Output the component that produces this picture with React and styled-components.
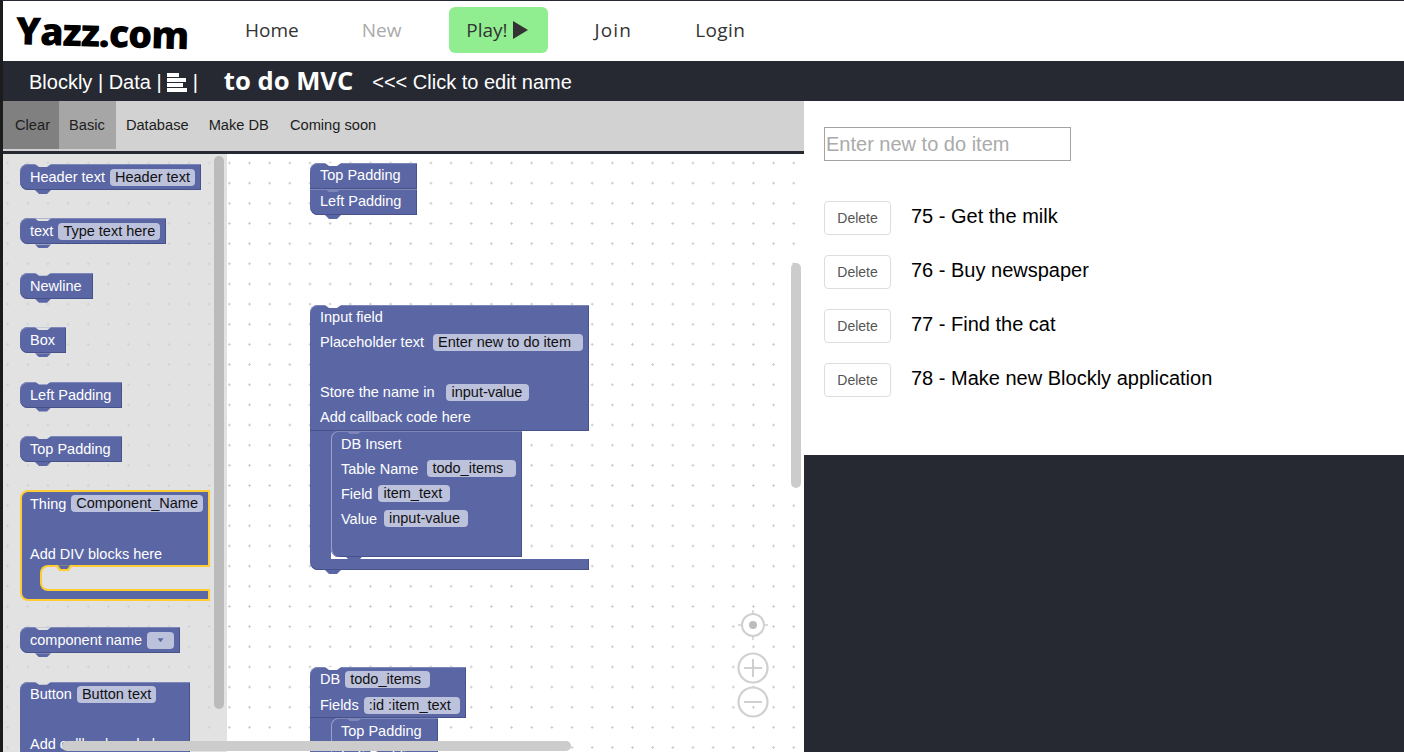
import React from 'react';
import styled, { createGlobalStyle } from 'styled-components';

const GlobalStyle = createGlobalStyle`
  html, body {
    margin: 0;
    padding: 0;
    background: #262932;
    overflow: hidden;
  }
  * {
    box-sizing: border-box;
  }
`;

const BLOCK = '#5b67a5';
const BLOCK_LIGHT = '#7e87b9';
const SANS = '"Liberation Sans", Arial, sans-serif';
const NAV = '"Open Sans", "Noto Sans", sans-serif';
const NOTCH = 'polygon(0 0, 100% 0, 75% 100%, 25% 100%)';

const Page = styled.div`
  width: 1404px;
  height: 752px;
  border-top: 1px solid #262932;
  border-left: 3px solid #1c1c1c;
  display: flex;
  flex-direction: column;
  overflow: hidden;
  font-family: ${SANS};
`;

const Header = styled.header`
  height: 60px;
  flex: none;
  background: #fff;
  padding-bottom: 2px;
  display: flex;
  align-items: center;
`;

const Logo = styled.div`
  width: 242px;
  padding-left: 13px;
  font-family: "Open Sans", sans-serif;
  font-weight: 800;
  font-size: 38px;
  letter-spacing: -1.1px;
  color: #000;
  white-space: nowrap;
  transform: translateY(-1px) rotate(1.6deg);
  transform-origin: left center;
`;

const NavLink = styled.a`
  margin-left: ${p => p.$ml || 0}px;
  font-family: ${NAV};
  font-size: 19px;
  letter-spacing: ${p => p.$spacing || 0}px;
  color: ${p => (p.$muted ? '#aaa' : '#333')};
`;

const PlayButton = styled.a`
  margin-left: 48px;
  width: 99px;
  height: 46px;
  background: #90ee90;
  border-radius: 6px;
  display: flex;
  align-items: center;
  justify-content: center;
  gap: 5px;
  padding-right: 4px;
  font-family: ${NAV};
  font-size: 19px;
  color: #333;
`;

const TitleBar = styled.div`
  height: 40px;
  flex: none;
  background: #262932;
  color: #fff;
  display: flex;
  align-items: center;
  padding: 2px 0 0 26px;
  font-size: 20px;
  white-space: nowrap;
`;

const Crumbs = styled.span`
  display: flex;
  align-items: center;
  gap: 5px;
`;

const AppName = styled.span`
  margin-left: 26px;
  margin-top: -3px;
  font-family: "Open Sans", sans-serif;
  font-weight: 700;
  font-size: 25.6px;
`;

const EditHint = styled.span`
  margin-left: 19px;
`;

const Main = styled.div`
  flex: 1;
  min-height: 0;
  display: flex;
`;

const LeftColumn = styled.div`
  width: 801px;
  flex: none;
  display: flex;
  flex-direction: column;
`;

const Toolbar = styled.div`
  height: 53px;
  flex: none;
  background: #d2d2d2;
  border-bottom: 3px solid #262932;
  display: flex;
  align-items: flex-start;
`;

const Tool = styled.a`
  height: 48px;
  display: flex;
  align-items: center;
  padding: 0 ${p => p.$pad || 10}px 0 ${p => p.$padLeft || 10}px;
  background: ${p => p.$bg || 'transparent'};
  font-size: 14.67px;
  color: #1c1c1c;
`;

const Workspace = styled.div`
  flex: 1;
  min-height: 0;
  position: relative;
  overflow: hidden;
  display: flex;
  background: #fff;
`;

const Flyout = styled.div`
  width: 224px;
  flex: none;
  background-color: #e2e2e2;
  background-image: radial-gradient(circle at center, #d2d2d2 1px, transparent 1.3px);
  background-size: 20.16px 20.16px;
  background-position: -5.48px -1.08px;
  padding: 10px 0 0 17px;
  display: flex;
  flex-direction: column;
  align-items: flex-start;
  gap: 28.4px;
`;

const Canvas = styled.div`
  flex: 1;
  position: relative;
  background-image: radial-gradient(circle at center, #ccc 1px, transparent 1.3px);
  background-size: 20.16px 20.16px;
  background-position: 12.44px -1.08px;
`;

const Placed = styled.div`
  position: absolute;
  left: ${p => p.$x}px;
  top: ${p => p.$y}px;
`;

const Block = styled.div`
  position: relative;
  width: ${p => (p.$w ? `${p.$w}px` : 'fit-content')};
  flex: none;
  background: ${BLOCK};
  color: #fff;
  font-family: ${SANS};
  font-size: 14.5px;
  white-space: nowrap;
  border-radius: ${p => (p.$stacked ? '8px 0 0 0' : p.$joined ? '0 0 0 8px' : '8px 0 0 8px')};
  box-shadow: inset 0 1px 0 ${BLOCK_LIGHT}, inset -1px 0 0 #47518a, inset 0 -1px 0 #47518a;

  &::before {
    content: '';
    position: absolute;
    left: 15px;
    top: 0;
    width: 16px;
    height: 3px;
    background: ${p => p.$under || '#fff'};
    clip-path: ${NOTCH};
  }

  &::after {
    content: '';
    position: absolute;
    z-index: 1;
    left: 15px;
    top: 100%;
    width: 16px;
    height: 4px;
    background: ${BLOCK};
    clip-path: ${NOTCH};
    display: ${p => (p.$noTab ? 'none' : 'block')};
  }
`;

const Row = styled.div`
  height: ${p => p.$h || 25}px;
  display: flex;
  align-items: center;
  padding: 0 ${p => p.$end || 6}px ${p => p.$lift || 0}px 10px;
`;

const Chip = styled.span`
  margin-left: ${p => p.$gap || 5}px;
  height: 17px;
  line-height: 16px;
  padding: 0 ${p => p.$right || 5}px 0 5px;
  background: #bcc1dc;
  border-radius: 4px;
  color: #111;
`;

const DropChip = styled.span`
  margin-left: 5px;
  width: 27px;
  height: 17px;
  background: #bcc1dc;
  border-radius: 4px;
  display: flex;
  align-items: center;
  justify-content: center;

  &::after {
    content: '';
    width: 6px;
    height: 4px;
    background: ${BLOCK};
    clip-path: polygon(0 0, 100% 0, 50% 100%);
  }
`;

const CBlock = styled.div`
  position: relative;
  width: ${p => p.$w}px;
  color: #fff;
  font-family: ${SANS};
  font-size: 14.5px;
  white-space: nowrap;

  &::before {
    content: '';
    position: absolute;
    z-index: 1;
    left: 15px;
    top: 0;
    width: 16px;
    height: 3px;
    background: ${p => p.$under || '#fff'};
    clip-path: ${NOTCH};
  }
`;

const CHead = styled.div`
  background: ${BLOCK};
  border-radius: 8px 0 0 0;
  box-shadow: inset 0 1px 0 ${BLOCK_LIGHT}, inset -1px 0 0 #47518a, inset 0 -1px 0 #47518a;
  height: ${p => p.$h}px;

  ${Row} {
    padding-bottom: 1px;
  }

  ${Chip} {
    margin-top: 1px;
  }
`;

const CMouth = styled.div`
  border-left: 21px solid ${BLOCK};
  padding-bottom: ${p => p.$gap || 0}px;
  background: linear-gradient(${BLOCK}, ${BLOCK}) no-repeat 0 0 / 8px 8px;
`;

const InnerBlock = styled(Block)`
  box-shadow: inset 1px 0 0 #9aa1cb, inset 0 1px 0 ${BLOCK_LIGHT}, inset -1px 0 0 #47518a,
    inset 0 -1px 0 #47518a;
  border-radius: ${p => (p.$last ? '8px 0 0 8px' : '8px 0 0 0')};
`;

const CFoot = styled.div`
  position: relative;
  height: 11px;
  background: ${BLOCK};
  border-radius: 0 0 0 8px;
  box-shadow: inset -1px 0 0 #47518a, inset 0 -1px 0 #47518a;

  &::after {
    content: '';
    position: absolute;
    left: 15px;
    top: 100%;
    width: 16px;
    height: 4px;
    background: ${BLOCK};
    clip-path: ${NOTCH};
  }
`;

const ThingBlock = styled.div`
  position: relative;
  width: 190px;
  height: 111px;
  margin-bottom: -2.4px;
  flex: none;
  background: ${BLOCK};
  border: 2px solid #fc3;
  border-radius: 8px 0 0 8px;
  color: #fff;
  font-family: ${SANS};
  font-size: 14.5px;
  white-space: nowrap;
  display: flex;
  flex-direction: column;
`;

const ThingRow = styled(Row)`
  padding-left: 8px;
`;

const ThingMouth = styled.div`
  position: relative;
  height: 26px;
  margin: -1px -2px 0 18px;
  background: #e2e2e2;
  border: 2px solid #fc3;
  border-right: none;
  border-radius: 8px 0 0 8px;

  &::before {
    content: '';
    position: absolute;
    left: 13px;
    top: -2px;
    width: 18px;
    height: 6px;
    background: #fc3;
    clip-path: ${NOTCH};
  }

  &::after {
    content: '';
    position: absolute;
    left: 16px;
    top: -2px;
    width: 12px;
    height: 4px;
    background: ${BLOCK};
    clip-path: ${NOTCH};
  }
`;

const Thumb = styled.div`
  position: absolute;
  left: ${p => p.$x}px;
  top: ${p => p.$y}px;
  width: ${p => p.$w}px;
  height: ${p => p.$h}px;
  background: ${p => p.$color || '#ccc'};
  border-radius: 5px;
`;

const ZoomControls = styled.svg`
  position: absolute;
  left: 730px;
  top: 454px;
`;

const RightColumn = styled.div`
  flex: 1;
  display: flex;
  flex-direction: column;
  background: #262932;
`;

const Preview = styled.div`
  height: 354px;
  flex: none;
  background: #fff;
  padding: 26px 0 0 20px;
`;

const ItemInput = styled.input`
  display: block;
  width: 247px;
  height: 34px;
  padding: 0 1px;
  border: 1px solid #a3a3a3;
  border-radius: 0;
  outline: none;
  font-family: ${SANS};
  font-size: 20px;
  color: #000;

  &::placeholder {
    color: #aaa;
    opacity: 1;
  }
`;

const TodoList = styled.div`
  margin-top: 40px;
  display: flex;
  flex-direction: column;
  gap: 20px;
`;

const TodoRow = styled.div`
  display: flex;
  align-items: flex-start;
  gap: 20px;
`;

const DeleteButton = styled.button`
  width: 67px;
  height: 34px;
  padding: 0;
  background: #fff;
  border: 1px solid #ddd;
  border-radius: 4px;
  font-family: ${SANS};
  font-size: 14px;
  color: #555;
`;

const TodoText = styled.span`
  font-size: 20px;
  line-height: 30px;
  color: #000;
`;

const todos = [
  '75 - Get the milk',
  '76 - Buy newspaper',
  '77 - Find the cat',
  '78 - Make new Blockly application',
];

const BarsIcon = () => (
  <svg width="21" height="19" viewBox="0 0 21 19" fill="#fff">
    <rect x="0" y="0" width="12" height="4" />
    <rect x="0" y="5" width="19" height="4" />
    <rect x="0" y="10" width="16" height="4" />
    <rect x="0" y="15" width="20" height="4" />
  </svg>
);

const PlayIcon = () => (
  <svg width="15" height="18" viewBox="0 0 15 18" fill="#333">
    <path d="M0 0 L15 9 L0 18 Z" />
  </svg>
);

const Simple = ({ label, field }) => (
  <Block $under="#e2e2e2">
    <Row $h={26} $end={field ? 6 : 11}>
      {label}
      {field && <Chip>{field}</Chip>}
    </Row>
  </Block>
);

export default function App() {
  return (
    <Page>
      <GlobalStyle />
      <Header>
        <Logo>Yazz.com</Logo>
        <NavLink>Home</NavLink>
        <NavLink $ml={63} $muted>New</NavLink>
        <PlayButton>Play! <PlayIcon /></PlayButton>
        <NavLink $ml={46} $spacing={1.2}>Join</NavLink>
        <NavLink $ml={63} $spacing={0.4}>Login</NavLink>
      </Header>
      <TitleBar>
        <Crumbs>Blockly | Data | <BarsIcon /> |</Crumbs>
        <AppName>to do MVC</AppName>
        <EditHint>&lt;&lt;&lt; Click to edit name</EditHint>
      </TitleBar>
      <Main>
        <LeftColumn>
          <Toolbar>
            <Tool $bg="#808080" $padLeft={12} $pad={9}>Clear</Tool>
            <Tool $bg="#a6a6a6" $pad={11}>Basic</Tool>
            <Tool>Database</Tool>
            <Tool>Make DB</Tool>
            <Tool $padLeft={11}>Coming soon</Tool>
          </Toolbar>
          <Workspace>
            <Flyout>
              <Simple label="Header text" field="Header text" />
              <Simple label="text" field="Type text here" />
              <Simple label="Newline" />
              <Simple label="Box" />
              <Simple label="Left Padding" />
              <Simple label="Top Padding" />
              <ThingBlock>
                <ThingRow $h={23}>Thing<Chip>Component_Name</Chip></ThingRow>
                <ThingRow $h={26} />
                <ThingRow>Add DIV blocks here</ThingRow>
                <ThingMouth />
              </ThingBlock>
              <Block $under="#e2e2e2">
                <Row $h={26}>component name<DropChip /></Row>
              </Block>
              <Block $under="#e2e2e2" $w={170}>
                <Row>Button<Chip>Button text</Chip></Row>
                <Row />
                <Row>Add callback code here</Row>
              </Block>
            </Flyout>
            <Canvas>
              <Placed $x={83} $y={9}>
                <Block $noTab $stacked>
                  <Row $h={26} $end={16} $lift={2}>Top Padding</Row>
                </Block>
                <Block $joined $under={BLOCK_LIGHT}>
                  <Row $h={26} $end={16} $lift={2}>Left Padding</Row>
                </Block>
              </Placed>
              <Placed $x={83} $y={151}>
                <CBlock $w={279}>
                  <CHead $h={126}>
                    <Row>Input field</Row>
                    <Row>Placeholder text<Chip $gap={9} $right={12}>Enter new to do item</Chip></Row>
                    <Row />
                    <Row>Store the name in<Chip $gap={12} $right={7}>input-value</Chip></Row>
                    <Row>Add callback code here</Row>
                  </CHead>
                  <CMouth $gap={2}>
                    <InnerBlock $w={191} $last $under={BLOCK_LIGHT}>
                      <Row>DB Insert</Row>
                      <Row>Table Name<Chip $gap={9} $right={13}>todo_items</Chip></Row>
                      <Row>Field<Chip $gap={6} $right={8}>item_text</Chip></Row>
                      <Row>Value<Chip $gap={7} $right={8}>input-value</Chip></Row>
                      <Row $h={26} />
                    </InnerBlock>
                  </CMouth>
                  <CFoot />
                </CBlock>
              </Placed>
              <Placed $x={83} $y={513}>
                <CBlock $w={156}>
                  <CHead $h={51}>
                    <Row $h={25.5}>DB<Chip $right={9}>todo_items</Chip></Row>
                    <Row $h={25.5}>Fields<Chip $right={9}>:id :item_text</Chip></Row>
                  </CHead>
                  <CMouth>
                    <InnerBlock $noTab $stacked $under={BLOCK_LIGHT}>
                      <Row $end={16}>Top Padding</Row>
                    </InnerBlock>
                    <InnerBlock $under={BLOCK_LIGHT}>
                      <Row $end={16}>Left Padding</Row>
                    </InnerBlock>
                  </CMouth>
                </CBlock>
              </Placed>
            </Canvas>
            <Thumb $x={211} $y={2} $w={10} $h={553} $color="#bbb" />
            <Thumb $x={788} $y={109} $w={10} $h={225} />
            <Thumb $x={59} $y={587} $w={509} $h={10} />
            <ZoomControls width="40" height="112" viewBox="0 0 40 112" fill="none" stroke="#d0d0d0">
              <circle cx="20" cy="17" r="11" strokeWidth="2" />
              <circle cx="20" cy="17" r="4" fill="#bdbdbd" stroke="none" />
              <path d="M20 2v5M20 27v5M5 17h5M30 17h5" strokeWidth="1.5" />
              <circle cx="20" cy="60" r="14.5" strokeWidth="2.2" />
              <path d="M11 60h18M20 51v18" strokeWidth="2" />
              <circle cx="20" cy="94" r="14.5" strokeWidth="2.2" />
              <path d="M11 94h18" strokeWidth="2" />
            </ZoomControls>
          </Workspace>
        </LeftColumn>
        <RightColumn>
          <Preview>
            <ItemInput placeholder="Enter new to do item" />
            <TodoList>
              {todos.map(todo => (
                <TodoRow key={todo}>
                  <DeleteButton>Delete</DeleteButton>
                  <TodoText>{todo}</TodoText>
                </TodoRow>
              ))}
            </TodoList>
          </Preview>
        </RightColumn>
      </Main>
    </Page>
  );
}
